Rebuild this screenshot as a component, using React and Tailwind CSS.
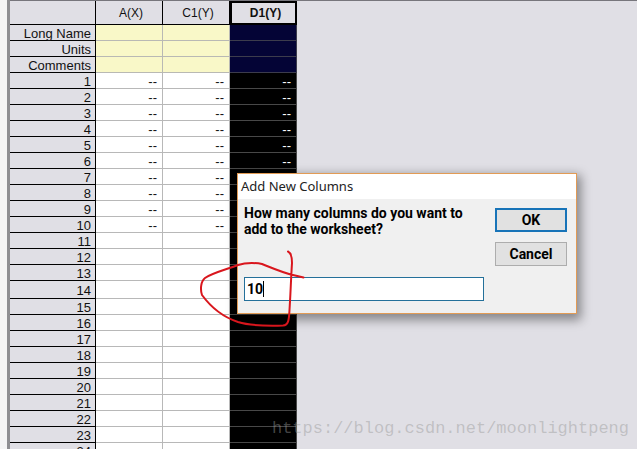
import React from 'react';
import clsx from 'clsx';

const metaRows = ['Long Name', 'Units', 'Comments'];
const dataRows = Array.from({ length: 24 }, (_, i) => i + 1);

// Last row of each column that holds a placeholder value
const LAST_FILLED = { a: 10, c1: 10, d1: 6 };

const placeholder = (column, row) => (row <= LAST_FILLED[column] ? '--' : '');

const RowLabel = ({ children }) => (
  <th scope="row" className="border-r border-b border-black bg-[#e0dfe5] pt-[2px] pr-1 pb-0 pl-0 text-right align-middle font-normal">
    {children}
  </th>
);

const Worksheet = () => (
  <table className="table-fixed w-[287px] shrink-0 border-separate border-spacing-0 text-[13px] leading-[13px] text-[#111]">
    <colgroup>
      <col className="w-[86px]" />
      <col className="w-[67px]" />
      <col className="w-[67px]" />
      <col className="w-[67px]" />
    </colgroup>
    <thead>
      <tr className="h-6 text-[12px]">
        <td className="border-r border-b border-black bg-[#e0dfe5] p-0" />
        <th scope="col" className="border-r border-b border-black bg-[#e0dfe5] pt-px pr-0 pb-0 pl-1 font-normal">A(X)</th>
        <th scope="col" className="border-r border-b border-black bg-[#e0dfe5] pt-px pr-0 pb-0 pl-1 font-normal">C1(Y)</th>
        <th scope="col" className="border-2 border-black bg-[#e0dfe5] p-0 pl-1 font-bold">D1(Y)</th>
      </tr>
    </thead>
    <tbody>
      {metaRows.map((label) => (
        <tr key={label} className="h-4">
          <RowLabel>{label}</RowLabel>
          <td className="border-r border-b border-[#b9b9b4] bg-[#f9f8c8] p-0" />
          <td className="border-r border-b border-[#b9b9b4] bg-[#f9f8c8] p-0" />
          <td className="border-r border-b border-[#3c3c4c] bg-[#040436] p-0" />
        </tr>
      ))}
      {dataRows.map((row) => (
        <tr key={row} className={clsx(row === 14 ? 'h-[18px]' : 'h-4')}>
          <RowLabel>{row}</RowLabel>
          <td className="border-r border-b border-[#b8b8b8] bg-white pt-[2px] pr-[5px] pb-0 pl-0 text-right">{placeholder('a', row)}</td>
          <td className="border-r border-b border-[#b8b8b8] bg-white pt-[2px] pr-[5px] pb-0 pl-0 text-right">{placeholder('c1', row)}</td>
          <td className="border-r border-b border-[#484848] bg-black pt-[2px] pr-[5px] pb-0 pl-0 text-right text-white">{placeholder('d1', row)}</td>
        </tr>
      ))}
    </tbody>
  </table>
);

const AddColumnsDialog = () => (
  <form
    role="dialog"
    aria-labelledby="dialog-title"
    className="absolute left-[237px] top-[173px] w-[340px] border border-[#e29b55] bg-[#f0f0f0] text-black shadow-[2px_4px_10px_2px_rgba(0,0,0,0.4)]"
  >
    <h1 id="dialog-title" className="bg-white px-[3px] font-['Noto_Sans',sans-serif] text-[13px] leading-[25px] text-[#222]">
      Add New Columns
    </h1>
    <div className="flex justify-between pt-[9px] pr-[9px] pb-3 pl-[6px] font-['Roboto','Liberation_Sans',sans-serif] text-[14px] font-bold">
      <div className="flex w-[240px] flex-col justify-between">
        <label htmlFor="column-count" className="-mt-[3px] leading-4">
          How many columns do you want to add to the worksheet?
        </label>
        <div className="relative">
          <input
            id="column-count"
            type="text"
            defaultValue="10"
            className="block h-6 w-full border border-[#24709a] bg-white px-[2px] outline-none"
          />
          <span className="absolute left-[19px] top-1 h-4 w-px bg-black" />
        </div>
      </div>
      <div className="flex w-[72px] flex-col gap-[10px] pb-[35px]">
        <button type="submit" className="h-6 border-2 border-[#1874b8] bg-[#e1e1e1] leading-4">OK</button>
        <button type="button" className="h-6 border border-[#adadad] bg-[#e1e1e1] leading-4">Cancel</button>
      </div>
    </div>
  </form>
);

// Hand-drawn circle around the typed value
const PenMark = () => (
  <svg
    className="pointer-events-none absolute left-[190px] top-[240px]"
    width="140"
    height="100"
    viewBox="0 0 140 100"
    fill="none"
    stroke="#d9161d"
    strokeWidth="2"
    strokeLinecap="round"
    strokeLinejoin="round"
    aria-hidden="true"
  >
    <path d="M98 11.500C101 13 102 17 102 23C101 38 100.500 55 99.500 70C99 80 98.500 85 93 85.500C77 86 61 86 48 82C33 77 20 66 12 55C10 49 11 41 15 38C22 33 38 29 48 25C57 22 68 23 72 24C82 28 94 33 103 35L113.500 37.500" />
  </svg>
);

const App = () => (
  <div className="relative flex h-screen overflow-hidden bg-[#e0dfe5] font-['Liberation_Sans',Arial,sans-serif]">
    <div className="w-[10px] shrink-0 border-r-[3px] border-[#8e8e92] bg-[#f4f4f5]" />
    <div className="min-w-0 flex-1 border-t border-[#77767c]">
      <Worksheet />
    </div>
    <AddColumnsDialog />
    <PenMark />
    <p className="absolute right-2 bottom-2 font-['Liberation_Mono',monospace] text-[17px] leading-6 text-[#999]/45">
      https://blog.csdn.net/moonlightpeng
    </p>
  </div>
);

export default App;
